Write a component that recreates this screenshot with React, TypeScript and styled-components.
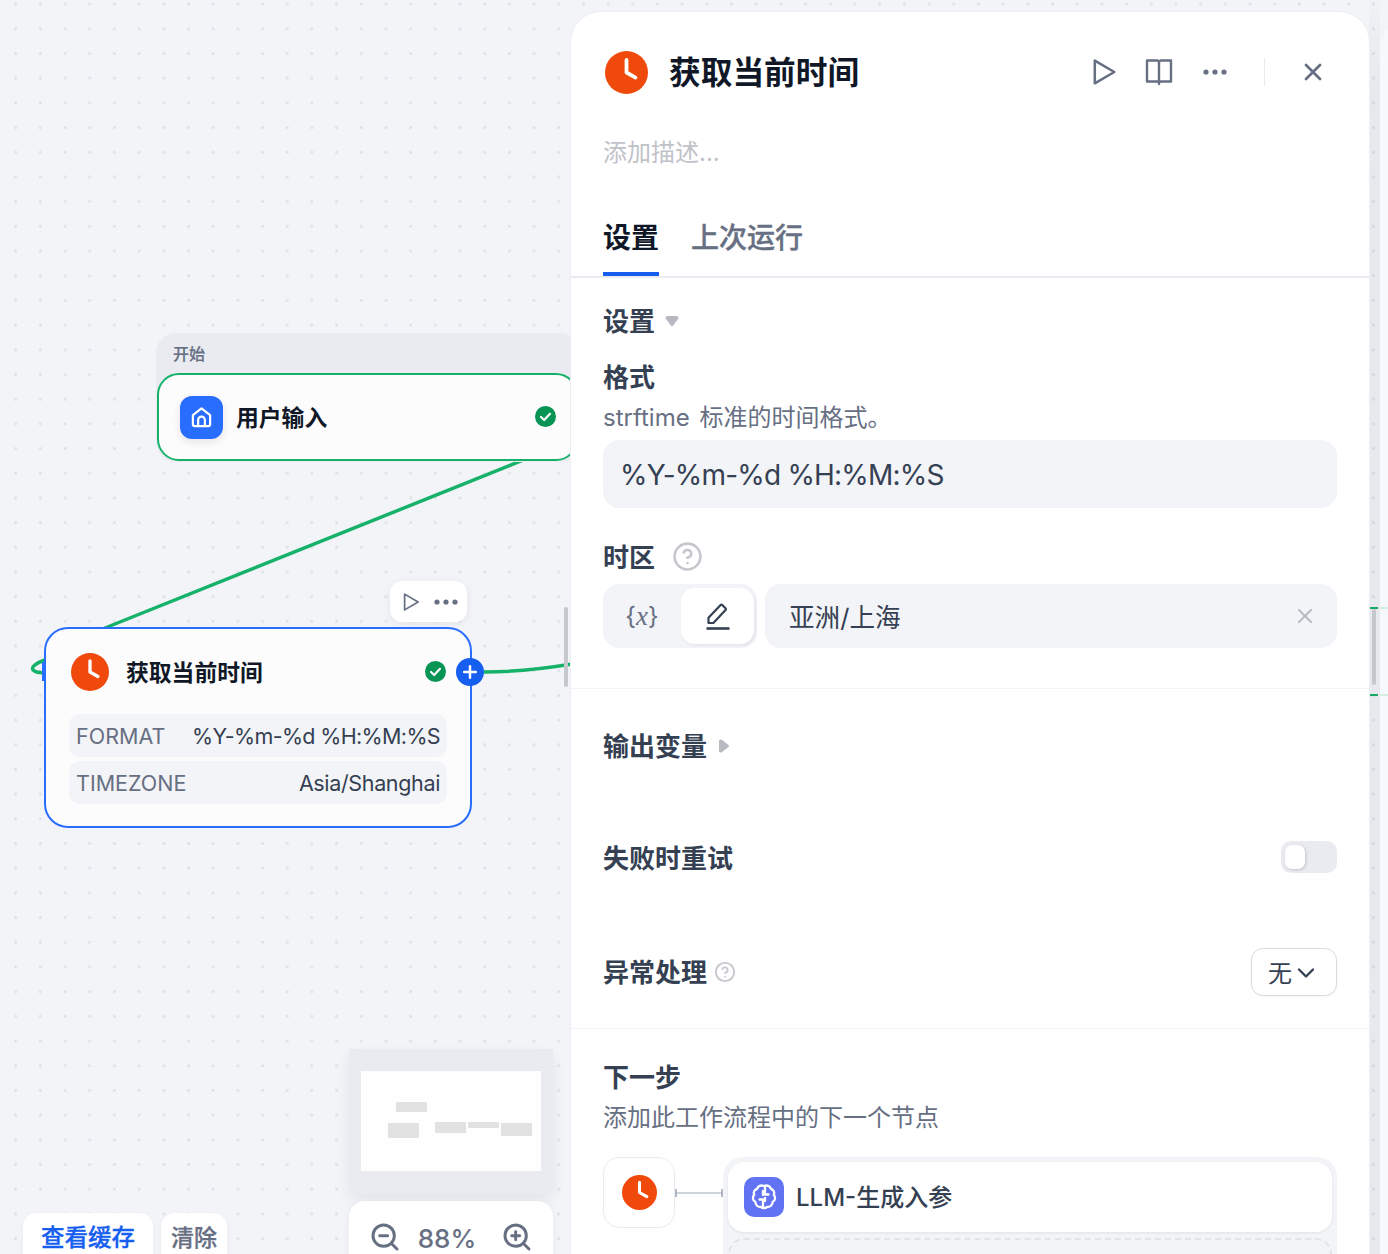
import React, { FC } from "react";
import styled, { createGlobalStyle } from "styled-components";
import { ChevronDown, CircleHelp, Plus, X, ZoomIn, ZoomOut } from "lucide-react";

const GlobalStyle = createGlobalStyle`
  html, body {
    margin: 0;
    padding: 0;
  }
  body {
    font-family: Inter, "Noto Sans CJK SC", sans-serif;
    color: #101828;
  }
  * {
    box-sizing: border-box;
  }
`;

const ClockIcon: FC<{ size: number }> = ({ size }) => (
  <svg width={size} height={size} viewBox="0 0 24 24" style={{ flex: "none" }}>
    <circle cx="12" cy="12" r="12" fill="#ef4a0c" />
    <path d="M12 5v7l5 2.8" fill="none" stroke="#fff" strokeWidth="2.1" strokeLinecap="round" strokeLinejoin="round" />
  </svg>
);

const CheckBadge: FC = () => (
  <svg width="21" height="21" viewBox="0 0 21 21">
    <circle cx="10.5" cy="10.5" r="10.5" fill="#079455" />
    <path d="M6 11l3.2 3L15 7.8" fill="none" stroke="#fff" strokeWidth="2.2" strokeLinecap="round" strokeLinejoin="round" />
  </svg>
);

const PlayIcon: FC<{ size: number }> = ({ size }) => (
  <svg width={size} height={size} viewBox="0 0 24 24">
    <path d="M3.5 1.5v21L21.5 12z" fill="none" stroke="#676f83" strokeWidth="2.3" strokeLinejoin="round" />
  </svg>
);

const DotsIcon: FC = () => (
  <svg width="24" height="6" viewBox="0 0 24 6">
    <circle cx="3" cy="3" r="2.6" fill="#676f83" />
    <circle cx="12" cy="3" r="2.6" fill="#676f83" />
    <circle cx="21" cy="3" r="2.6" fill="#676f83" />
  </svg>
);

const BookIcon: FC = () => (
  <svg width="28" height="28" viewBox="0 0 28 28">
    <path
      d="M14 26V4.5A2 2 0 0 0 12 2.5H2v21h10a2 2 0 0 1 2 2.5a2 2 0 0 1 2-2.5h10v-21H16a2 2 0 0 0-2 2"
      fill="none"
      stroke="#676f83"
      strokeWidth="2.4"
      strokeLinejoin="round"
    />
  </svg>
);

const PencilLineIcon: FC = () => (
  <svg width="26" height="28" viewBox="0 0 26 28">
    <path
      d="M3.5 21V15.8L15.6 3a1.2 1.2 0 0 1 1.7 0l3.2 3.3a1.2 1.2 0 0 1 0 1.7L8.4 21z"
      fill="none"
      stroke="#354052"
      strokeWidth="2.2"
      strokeLinejoin="round"
    />
    <path d="M1.5 26.5h23" stroke="#354052" strokeWidth="2.6" />
  </svg>
);

const HomeIcon: FC = () => (
  <svg width="23" height="23" viewBox="0 0 24 24" fill="none" stroke="#fff" strokeWidth="2.3" strokeLinejoin="round">
    <path d="M12 2.5L3 9.5V19a2 2 0 0 0 2 2h14a2 2 0 0 0 2-2V9.5z" />
    <path d="M8.5 21v-6.5a3.500 3.500 0 0 1 7 0V21" />
  </svg>
);

const BrainIcon: FC = () => (
  <svg width="30" height="30" viewBox="0 0 30 30" fill="none" stroke="#fff" strokeWidth="2.3" strokeLinecap="round" strokeLinejoin="round">
    <path d="M15 4C12 2.800 8.800 4 8 7C5.500 7.500 4 10.500 5.300 12.800C3.300 14.800 3.500 18.500 6.300 19.800C6.300 23 9 25.500 12 24.800C13 26.500 17 26.500 18 24.800C21 25.500 23.700 23 23.700 19.800C26.500 18.500 26.700 14.800 24.700 12.800C26 10.500 24.500 7.500 22 7C21.200 4 18 2.800 15 4Z" />
    <path d="M16 4.500V12.500H19.500" />
    <path d="M14 25V17.500H10.500" />
    <path d="M16 16V19" />
    <path d="M14 9V13" />
  </svg>
);

const Caret: FC<{ $open?: boolean }> = ({ $open }) => (
  <svg width="14" height="14" viewBox="0 0 14 14" style={{ transform: $open ? "none" : "rotate(-90deg)" }}>
    <path d="M2.300 2h9.400a1.800 1.800 0 0 1 1.500 2.800L8.300 11.200a1.600 1.600 0 0 1-2.600 0L.8 4.800A1.800 1.800 0 0 1 2.300 2z" fill="#b8bac1" />
  </svg>
);

const Page = styled.div`
  position: relative;
  width: 1388px;
  height: 1254px;
  overflow: hidden;
  background-color: #f3f4f8;
  background-image: radial-gradient(circle, #dfe2e8 1.3px, transparent 1.6px);
  background-size: 24.7px 24.7px;
  background-position: 3.3px -8.2px;
`;

/* canvas */

const Edges = styled.svg`
  position: absolute;
  left: 0;
  top: 0;
`;

const StartGroup = styled.div`
  position: absolute;
  left: 156px;
  top: 333px;
  width: 424px;
  height: 129px;
  padding: 2px 2px 1px 1px;
  display: flex;
  flex-direction: column;
  background: #e9ebf0;
  border-radius: 20px;
`;

const StartLabel = styled.div`
  height: 38px;
  padding-left: 16px;
  line-height: 38px;
  font-size: 16px;
  font-weight: 500;
  color: #676f83;
  -webkit-text-stroke: 0.2px #676f83;
`;

const StartNode = styled.div`
  flex: 1;
  display: flex;
  align-items: center;
  padding: 0 21px;
  background: #fcfcfd;
  border: 2px solid #17b26a;
  border-radius: 22px;
`;

const HomeTile = styled.div`
  width: 43px;
  height: 43px;
  display: flex;
  align-items: center;
  justify-content: center;
  background: #296dff;
  border-radius: 12px;
  box-shadow: 0 3px 8px rgba(16, 24, 40, 0.1);
`;

const NodeTitle = styled.div<{ $gap: number }>`
  margin-left: ${(p) => p.$gap}px;
  margin-bottom: 1px;
  font-size: 22.8px;
  font-weight: 600;
  color: #101828;
`;

const StartBadge = styled.div`
  position: absolute;
  display: flex;
  top: 73px;
  left: 379px;
`;

const NodeToolbar = styled.div`
  position: absolute;
  left: 390px;
  top: 581px;
  width: 77px;
  height: 41px;
  display: flex;
  align-items: center;
  gap: 14px;
  padding-left: 12px;
  background: #fff;
  border-radius: 12px;
  box-shadow: 0 2px 8px rgba(16, 24, 40, 0.07);
`;

const TimeNode = styled.div`
  position: absolute;
  left: 44px;
  top: 627px;
  width: 428px;
  height: 201px;
  padding: 0 23px;
  background: #fcfcfd;
  border: 2px solid #296dff;
  border-radius: 24px;
`;

const TimeNodeHead = styled.div`
  height: 85px;
  display: flex;
  align-items: center;
  padding-left: 2px;
`;

const Gutter = styled.div`
  margin-left: auto;
  margin-right: 1px;
  display: flex;
`;

const ParamList = styled.div`
  display: flex;
  flex-direction: column;
  gap: 4px;
`;

const ParamRow = styled.div`
  height: 43px;
  display: flex;
  align-items: center;
  justify-content: space-between;
  padding: 0 7px;
  font-size: 21.5px;
  background: #f2f4f7;
  border-radius: 11px;
`;

const ParamName = styled.span`
  color: #676f83;
`;

const ParamValue = styled.span<{ $tight?: boolean }>`
  color: #354052;
  letter-spacing: ${(p) => (p.$tight ? -0.65 : -0.35)}px;
`;

const AddHandle = styled.div`
  position: absolute;
  left: 456px;
  top: 658px;
  width: 28px;
  height: 28px;
  display: flex;
  align-items: center;
  justify-content: center;
  background: #155eef;
  border-radius: 50%;
`;

const TargetHandle = styled.div`
  position: absolute;
  left: 42px;
  top: 662px;
  width: 3px;
  height: 19px;
  background: #296dff;
`;

const CanvasScroll = styled.div`
  position: absolute;
  left: 564px;
  top: 607px;
  width: 4px;
  height: 80px;
  background: #c5c7cd;
  border-radius: 2px;
`;

const CacheBar = styled.div`
  position: absolute;
  left: 23px;
  top: 1213px;
  display: flex;
  gap: 8px;
`;

const CacheButton = styled.div<{ $primary?: boolean }>`
  height: 60px;
  padding: 10px ${(p) => (p.$primary ? 18 : 10)}px 0;
  font-size: ${(p) => (p.$primary ? 23.5 : 23)}px;
  font-weight: 500;
  line-height: 30px;
  color: ${(p) => (p.$primary ? "#155eef" : "#676f83")};
  -webkit-text-stroke: 0.3px ${(p) => (p.$primary ? "#155eef" : "#676f83")};
  background: #fff;
  border-radius: 14px;
  box-shadow: 0 2px 6px rgba(16, 24, 40, 0.04);
`;

const Minimap = styled.div`
  position: absolute;
  left: 349px;
  top: 1049px;
  width: 204px;
  height: 145px;
  padding: 22px 12px;
  background: #e9ebf0;
  border-radius: 0 0 10px 10px;
  box-shadow: 0 6px 14px rgba(16, 24, 40, 0.07);
`;

const MinimapSheet = styled.svg`
  display: block;
  background: #fefefe;
`;

const ZoomBar = styled.div`
  position: absolute;
  left: 349px;
  top: 1201px;
  width: 204px;
  height: 80px;
  display: flex;
  justify-content: space-between;
  padding: 20px 20px 0;
  color: #676f83;
  background: #fff;
  border-radius: 16px;
  box-shadow: 0 2px 10px rgba(16, 24, 40, 0.05);
`;

const ZoomValue = styled.span`
  margin-right: 8px;
  font-size: 26px;
  font-weight: 500;
  line-height: 36px;
`;

/* neighbour panel peeking in on the right */

const PanelGap = styled.div`
  position: absolute;
  left: 1369px;
  top: 0;
  width: 11px;
  height: 1254px;
  background: linear-gradient(rgba(16, 24, 40, 0.01) 0, rgba(16, 24, 40, 0.05) 90px);
`;

const NextPanel = styled.div`
  position: absolute;
  left: 1380px;
  top: 22px;
  width: 60px;
  height: 1300px;
  background: #f7f8fb;
  border-radius: 26px 0 0 0;
`;

const GapScroll = styled.div`
  position: absolute;
  left: 1372px;
  top: 609px;
  width: 4px;
  height: 76px;
  background: #c5c7cd;
  border-radius: 2px;
`;

const EdgeMark = styled.div<{ $y: number }>`
  position: absolute;
  left: 1369px;
  top: ${(p) => p.$y}px;
  width: 19px;
  height: 2px;
  background: linear-gradient(90deg, #17a866 0 9px, transparent 9px 11px, #d4efe2 11px);
`;

/* side panel */

const Panel = styled.div`
  position: absolute;
  left: 571px;
  top: 12px;
  width: 798px;
  height: 1300px;
  display: flex;
  flex-direction: column;
  background: #fff;
  border-radius: 30px 30px 0 0;
  box-shadow: 0 0 0 1px #eceef2;
`;

const PanelHead = styled.div`
  height: 120px;
  flex: none;
  display: flex;
  align-items: center;
  padding: 0 28px 0 34px;
`;

const PanelTitle = styled.h1`
  margin: 0 0 4px 21px;
  font-size: 31.7px;
  font-weight: 600;
  color: #101828;
`;

const HeadActions = styled.div`
  margin-left: auto;
  display: flex;
  align-items: center;
`;

const IconButton = styled.div`
  width: 55.5px;
  height: 56px;
  display: flex;
  align-items: center;
  justify-content: center;
  color: #676f83;
`;

const HeadDivider = styled.div`
  width: 1px;
  height: 28px;
  margin: 0 21px;
  background: #e9ebf0;
`;

const Description = styled.div`
  height: 42px;
  flex: none;
  padding-left: 32px;
  line-height: 42px;
  font-size: 24px;
  color: #c0c2c9;
`;

const Tabs = styled.div`
  flex: none;
  margin-top: 24px;
  display: flex;
  gap: 32px;
  padding-left: 32px;
  border-bottom: 2px solid #e9ebf0;
`;

const Tab = styled.div<{ $active?: boolean }>`
  height: 78px;
  display: flex;
  align-items: center;
  font-size: 28px;
  font-weight: ${(p) => (p.$active ? 600 : 500)};
  color: ${(p) => (p.$active ? "#101828" : "#676f83")};
  -webkit-text-stroke: ${(p) => (p.$active ? "0" : "0.35px #676f83")};
  border-top: 2px solid transparent;
  border-bottom: 4px solid ${(p) => (p.$active ? "#155eef" : "transparent")};
`;

const Section = styled.section`
  flex: none;
  padding: 25px 32px 40px;
  border-bottom: 1px solid #f2f4f7;
`;

const Label = styled.div<{ $top?: number; $gap?: number }>`
  height: 36px;
  margin-top: ${(p) => p.$top ?? 0}px;
  padding-bottom: 4px;
  display: flex;
  align-items: center;
  gap: ${(p) => p.$gap ?? 10}px;
  font-size: 26px;
  font-weight: 600;
  color: #354052;

  svg {
    margin-top: 3px;
  }
`;

const Hint = styled.div<{ $top: number }>`
  height: 34px;
  margin-top: ${(p) => p.$top}px;
  line-height: 35px;
  font-size: 24px;
  word-spacing: 3px;
  color: #676f83;
`;

const TextField = styled.div`
  height: 68px;
  margin-top: 6px;
  padding-left: 17px;
  line-height: 71px;
  font-size: 28px;
  letter-spacing: -0.8px;
  color: #354052;
  background: #f2f4f7;
  border-radius: 16px;
`;

const TimezoneRow = styled.div`
  height: 64px;
  margin-top: 9px;
  display: flex;
  gap: 8px;
`;

const ModeSwitch = styled.div`
  width: 154px;
  flex: none;
  display: flex;
  align-items: center;
  padding: 4px 3px 4px 0;
  background: #f2f4f7;
  border-radius: 16px;
`;

const ModeOption = styled.div<{ $active?: boolean }>`
  height: 56px;
  display: flex;
  align-items: center;
  justify-content: center;
  flex: ${(p) => (p.$active ? "none" : 1)};
  width: ${(p) => (p.$active ? "73px" : "auto")};
  font-size: 25px;
  color: #676f83;
  background: ${(p) => (p.$active ? "#fff" : "transparent")};
  border-radius: 14px;
  box-shadow: ${(p) => (p.$active ? "2px 2px 3px rgba(16, 24, 40, 0.06)" : "none")};

  i {
    font-family: "Liberation Serif", serif;
    font-size: 27px;
  }
`;

const SelectField = styled.div`
  flex: 1;
  display: flex;
  align-items: center;
  justify-content: space-between;
  padding: 0 20px 0 24px;
  font-size: 25.6px;
  color: #354052;
  background: #f2f4f7;
  border-radius: 16px;
`;

const SelectValue = styled.span`
  margin-bottom: 2px;
`;

const Options = styled.section`
  flex: none;
  display: flex;
  flex-direction: column;
  padding: 31px 32px 30px;
  border-bottom: 1px solid #f2f4f7;
`;

const OptionRow = styled.div<{ $top?: number }>`
  height: 52px;
  margin-top: ${(p) => p.$top ?? 0}px;
  display: flex;
  align-items: center;
  justify-content: space-between;
`;

const Switch = styled.div`
  width: 56px;
  height: 32px;
  margin-bottom: 2px;
  padding: 4px;
  background: #e9ebf0;
  border-radius: 10px;
`;

const SwitchKnob = styled.div`
  width: 20px;
  height: 24px;
  background: #fff;
  border-radius: 7px;
  box-shadow: 1px 1px 3px rgba(16, 24, 40, 0.18);
`;

const Dropdown = styled.div`
  width: 86px;
  height: 48px;
  display: flex;
  align-items: center;
  padding: 0 0 2px 16px;
  font-size: 24px;
  color: #354052;
  background: #fff;
  border: 1px solid #d8dbe1;
  border-radius: 12px;
  box-shadow: 0 1px 2px rgba(16, 24, 40, 0.04);

  svg {
    margin-top: 3px;
  }
`;

const NextStep = styled.section`
  flex: none;
  padding: 30px 32px 0;
`;

const StepFlow = styled.div`
  margin-top: 23px;
  display: flex;
  align-items: flex-start;
`;

const StepTile = styled.div`
  width: 72px;
  height: 71px;
  flex: none;
  display: flex;
  align-items: center;
  justify-content: center;
  background: #fff;
  border: 1px solid #e9ebf0;
  border-radius: 16px;
`;

const StepLink = styled.svg`
  flex: none;
  margin-top: 31px;
`;

const StepGroup = styled.div`
  flex: 1;
  display: flex;
  flex-direction: column;
  gap: 6px;
  padding: 5px;
  background: #f2f4f7;
  border-radius: 20px;
`;

const StepCard = styled.div`
  height: 70px;
  display: flex;
  align-items: center;
  gap: 12px;
  padding-left: 16px;
  background: #fff;
  border-radius: 16px;
  box-shadow: 0 1px 3px rgba(16, 24, 40, 0.08);
`;

const StepName = styled.span`
  margin-bottom: 3px;
  font-size: 24px;
  font-weight: 500;
  color: #354052;
`;

const LlmTile = styled.div`
  width: 40px;
  height: 40px;
  display: flex;
  align-items: center;
  justify-content: center;
  background: #6172f3;
  border-radius: 10px;
`;

const AddStep = styled.div`
  height: 70px;
  border: 2px dashed #e0e3e8;
  border-radius: 16px;
`;

const App: FC = () => {
  return (
    <Page>
      <GlobalStyle />

      <Edges width="600" height="1254" viewBox="0 0 600 1254" fill="none">
        <path
          d="M45 660C36 663 31 667 33 670C35 672 40 673 46 673"
          stroke="#17b26a"
          strokeWidth="3.5"
        />
        <path d="M526 459L100 630" stroke="#17b26a" strokeWidth="3.5" />
        <path d="M484 672C520 672 548 668 572 664" stroke="#17b26a" strokeWidth="3.5" />
      </Edges>

      <StartGroup>
        <StartLabel>开始</StartLabel>
        <StartNode>
          <HomeTile>
            <HomeIcon />
          </HomeTile>
          <NodeTitle $gap={13}>用户输入</NodeTitle>
          <StartBadge>
            <CheckBadge />
          </StartBadge>
        </StartNode>
      </StartGroup>

      <NodeToolbar>
        <PlayIcon size={18} />
        <DotsIcon />
      </NodeToolbar>

      <TimeNode>
        <TimeNodeHead>
          <ClockIcon size={38} />
          <NodeTitle $gap={17}>获取当前时间</NodeTitle>
          <Gutter>
            <CheckBadge />
          </Gutter>
        </TimeNodeHead>
        <ParamList>
          <ParamRow>
            <ParamName>FORMAT</ParamName>
            <ParamValue $tight>%Y-%m-%d %H:%M:%S</ParamValue>
          </ParamRow>
          <ParamRow>
            <ParamName>TIMEZONE</ParamName>
            <ParamValue>Asia/Shanghai</ParamValue>
          </ParamRow>
        </ParamList>
      </TimeNode>
      <TargetHandle />
      <AddHandle>
        <Plus size={20} color="#fff" strokeWidth={3} />
      </AddHandle>
      <CanvasScroll />

      <CacheBar>
        <CacheButton $primary>查看缓存</CacheButton>
        <CacheButton>清除</CacheButton>
      </CacheBar>

      <Minimap>
        <MinimapSheet width="180" height="100" viewBox="0 0 180 100" fill="#e2e2e2">
          <rect x="35" y="31" width="31" height="10" />
          <rect x="27" y="52" width="31" height="15" />
          <rect x="74" y="51" width="31" height="11" />
          <rect x="107" y="51" width="31" height="6" />
          <rect x="140" y="52" width="31" height="13" />
        </MinimapSheet>
      </Minimap>
      <ZoomBar>
        <ZoomOut size={32} strokeWidth={2.2} />
        <ZoomValue>88%</ZoomValue>
        <ZoomIn size={32} strokeWidth={2.2} />
      </ZoomBar>

      <PanelGap />
      <NextPanel />
      <GapScroll />
      <EdgeMark $y={607} />
      <EdgeMark $y={694} />

      <Panel>
        <PanelHead>
          <ClockIcon size={43} />
          <PanelTitle>获取当前时间</PanelTitle>
          <HeadActions>
            <IconButton>
              <PlayIcon size={26} />
            </IconButton>
            <IconButton>
              <BookIcon />
            </IconButton>
            <IconButton>
              <DotsIcon />
            </IconButton>
            <HeadDivider />
            <IconButton>
              <X size={28} strokeWidth={2.4} />
            </IconButton>
          </HeadActions>
        </PanelHead>
        <Description>添加描述...</Description>
        <Tabs>
          <Tab $active>设置</Tab>
          <Tab>上次运行</Tab>
        </Tabs>

        <Section>
          <Label>
            设置
            <Caret $open />
          </Label>
          <Label $top={20}>格式</Label>
          <Hint $top={5}>strftime 标准的时间格式。</Hint>
          <TextField>%Y-%m-%d %H:%M:%S</TextField>
          <Label $top={31} $gap={17}>
            时区
            <CircleHelp size={31} color="#c5c7cd" strokeWidth={2} />
          </Label>
          <TimezoneRow>
            <ModeSwitch>
              <ModeOption>
                {"{"}
                <i>x</i>
                {"}"}
              </ModeOption>
              <ModeOption $active>
                <PencilLineIcon />
              </ModeOption>
            </ModeSwitch>
            <SelectField>
              <SelectValue>亚洲/上海</SelectValue>
              <X size={24} color="#b8bac1" strokeWidth={2} />
            </SelectField>
          </TimezoneRow>
        </Section>

        <Options>
          <OptionRow>
            <Label>
              输出变量
              <Caret />
            </Label>
          </OptionRow>
          <OptionRow $top={60}>
            <Label>失败时重试</Label>
            <Switch>
              <SwitchKnob />
            </Switch>
          </OptionRow>
          <OptionRow $top={62}>
            <Label $gap={7}>
              异常处理
              <CircleHelp size={22} color="#c5c7cd" strokeWidth={2} />
            </Label>
            <Dropdown>
              无
              <ChevronDown size={28} color="#354052" strokeWidth={2} />
            </Dropdown>
          </OptionRow>
        </Options>

        <NextStep>
          <Label>下一步</Label>
          <Hint $top={5}>添加此工作流程中的下一个节点</Hint>
          <StepFlow>
            <StepTile>
              <ClockIcon size={35} />
            </StepTile>
            <StepLink width="48" height="10" viewBox="0 0 48 10">
              <path d="M1 5h46" stroke="#d0d5dc" strokeWidth="2" />
              <path d="M1 1v8M47 1v8" stroke="#98a2b2" strokeWidth="1.5" />
            </StepLink>
            <StepGroup>
              <StepCard>
                <LlmTile>
                  <BrainIcon />
                </LlmTile>
                <StepName>LLM-生成入参</StepName>
              </StepCard>
              <AddStep />
            </StepGroup>
          </StepFlow>
        </NextStep>
      </Panel>
    </Page>
  );
};

export default App;
